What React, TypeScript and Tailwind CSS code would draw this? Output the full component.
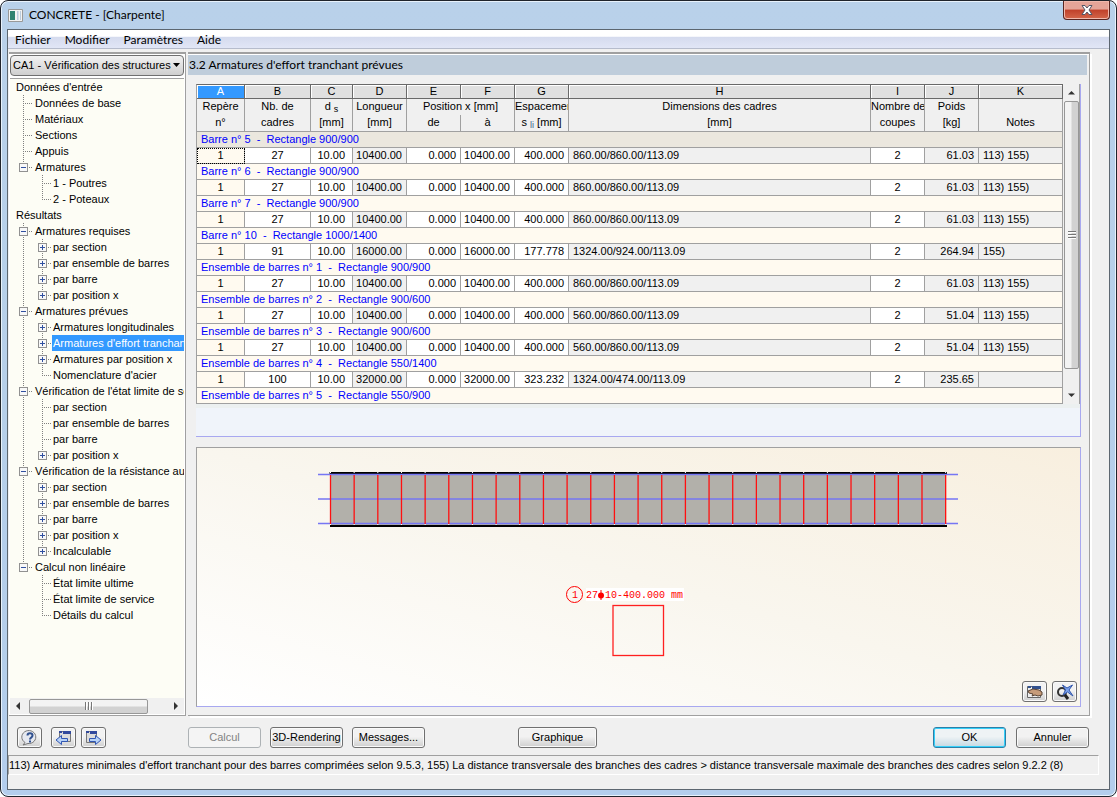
import clsx from "clsx";
import type { ReactNode } from "react";

type Node = { label: string; expand?: "+" | "-"; selected?: boolean; children?: Node[] };

const bySection: Node[] = [
	{ label: "par section", expand: "+" },
	{ label: "par ensemble de barres", expand: "+" },
	{ label: "par barre", expand: "+" },
	{ label: "par position x", expand: "+" },
];

const tree: Node[] = [
	{
		label: "Données d'entrée",
		children: [
			{ label: "Données de base" },
			{ label: "Matériaux" },
			{ label: "Sections" },
			{ label: "Appuis" },
			{ label: "Armatures", expand: "-", children: [{ label: "1 - Poutres" }, { label: "2 - Poteaux" }] },
		],
	},
	{
		label: "Résultats",
		children: [
			{ label: "Armatures requises", expand: "-", children: bySection },
			{
				label: "Armatures prévues",
				expand: "-",
				children: [
					{ label: "Armatures longitudinales", expand: "+" },
					{ label: "Armatures d'effort tranchant", expand: "+", selected: true },
					{ label: "Armatures par position x", expand: "+" },
					{ label: "Nomenclature d'acier" },
				],
			},
			{
				label: "Vérification de l'état limite de service",
				expand: "-",
				children: [
					{ label: "par section" },
					{ label: "par ensemble de barres" },
					{ label: "par barre" },
					{ label: "par position x", expand: "+" },
				],
			},
			{
				label: "Vérification de la résistance au feu",
				expand: "-",
				children: [...bySection, { label: "Incalculable", expand: "+" }],
			},
			{
				label: "Calcul non linéaire",
				expand: "-",
				children: [{ label: "État limite ultime" }, { label: "État limite de service" }, { label: "Détails du calcul" }],
			},
		],
	},
];

const groups = [
	{ title: "Barre n° 5  -  Rectangle 900/900", row: ["1", "27", "10.00", "10400.00", "0.000", "10400.00", "400.000", "860.00/860.00/113.09", "2", "61.03", "113) 155)"] },
	{ title: "Barre n° 6  -  Rectangle 900/900", row: ["1", "27", "10.00", "10400.00", "0.000", "10400.00", "400.000", "860.00/860.00/113.09", "2", "61.03", "113) 155)"] },
	{ title: "Barre n° 7  -  Rectangle 900/900", row: ["1", "27", "10.00", "10400.00", "0.000", "10400.00", "400.000", "860.00/860.00/113.09", "2", "61.03", "113) 155)"] },
	{ title: "Barre n° 10  -  Rectangle 1000/1400", row: ["1", "91", "10.00", "16000.00", "0.000", "16000.00", "177.778", "1324.00/924.00/113.09", "2", "264.94", "155)"] },
	{ title: "Ensemble de barres n° 1  -  Rectangle 900/900", row: ["1", "27", "10.00", "10400.00", "0.000", "10400.00", "400.000", "860.00/860.00/113.09", "2", "61.03", "113) 155)"] },
	{ title: "Ensemble de barres n° 2  -  Rectangle 900/600", row: ["1", "27", "10.00", "10400.00", "0.000", "10400.00", "400.000", "560.00/860.00/113.09", "2", "51.04", "113) 155)"] },
	{ title: "Ensemble de barres n° 3  -  Rectangle 900/600", row: ["1", "27", "10.00", "10400.00", "0.000", "10400.00", "400.000", "560.00/860.00/113.09", "2", "51.04", "113) 155)"] },
	{ title: "Ensemble de barres n° 4  -  Rectangle 550/1400", row: ["1", "100", "10.00", "32000.00", "0.000", "32000.00", "323.232", "1324.00/474.00/113.09", "2", "235.65", ""] },
	{ title: "Ensemble de barres n° 5  -  Rectangle 550/900" },
];

const columnWidths = ["w-12", "w-[66px]", "w-[42px]", "w-[54px]", "w-[54px]", "w-[54px]", "w-[54px]", "", "w-[54px]", "w-[54px]", "w-[84px]"];

const cellStyles = [
	"bg-[#fffaf0] text-center",
	"bg-white text-center",
	"bg-white text-right pr-[7px]",
	"bg-[#f0f0f0] text-right pr-1",
	"bg-white text-right pr-1",
	"bg-white text-right pr-1",
	"bg-white text-right pr-1",
	"bg-[#f0f0f0] text-left pl-1",
	"bg-white text-center",
	"bg-[#f0f0f0] text-right pr-1",
	"bg-[#f0f0f0] text-left pl-1",
];

function Cell({ kind, last }: { kind: "line" | "stop" | "empty" | "+" | "-"; last?: boolean }) {
	const box = kind === "+" || kind === "-";
	const svg = (
		<svg width="19" height="16" viewBox="0 0 19 16" shapeRendering="crispEdges" aria-hidden="true">
			{kind !== "empty" && <path d={last ? "M9.5 0V9" : "M9.5 0V16"} stroke="#808080" strokeDasharray="1 1" />}
			{(box || kind === "stop") && <path d="M9 8.5H18" stroke="#808080" strokeDasharray="1 1" />}
			{box && (
				<>
					<rect x="5.5" y="4.5" width="8" height="8" fill="#f8f8f8" stroke="#919191" />
					<path d="M7 8.5h5" stroke="#3050a0" />
				</>
			)}
			{kind === "+" && <path d="M9.5 6v5" stroke="#3050a0" />}
		</svg>
	);
	if (!box) return <span className="shrink-0">{svg}</span>;
	return (
		<button type="button" aria-label={kind === "+" ? "Développer" : "Réduire"} className="shrink-0">
			{svg}
		</button>
	);
}

function Branch({ node, depth, last, parentLast }: { node: Node; depth: number; last: boolean; parentLast: boolean }) {
	return (
		<li role="treeitem" aria-selected={!!node.selected}>
			<div className="flex h-4 items-stretch leading-4">
				{depth === 2 && <Cell kind={parentLast ? "empty" : "line"} />}
				{depth > 0 && <Cell kind={node.expand ?? "stop"} last={last} />}
				<span className={clsx("flex-1", depth === 2 ? "pl-px" : "pl-0.5", node.selected && "bg-[#3399ff] text-white")}>{node.label}</span>
			</div>
			{node.children && (
				<ul role="group">
					{node.children.map((child, i) => (
						<Branch key={child.label} node={child} depth={depth + 1} last={i === node.children!.length - 1} parentLast={last} />
					))}
				</ul>
			)}
		</li>
	);
}

function Sidebar() {
	return (
		<aside className="flex w-[177px] shrink-0 flex-col border-t-2 border-r border-b border-[#a0a0a0] bg-white p-px">
			<div className="relative mb-0.5">
				<select
					aria-label="Cas de calcul"
					className="h-[21px] w-full appearance-none rounded-sm border border-[#707070] bg-linear-to-b from-[#f2f2f2] to-[#cfcfcf] pl-0.5"
				>
					<option>CA1 - Vérification des structures</option>
				</select>
				<svg className="pointer-events-none absolute top-2 right-1" width="7" height="4" aria-hidden="true">
					<path d="M0 0h7L3.5 4z" />
				</svg>
			</div>
			<div className="flex flex-1 flex-col border-t border-[#a0a0a0] bg-[#fdfdf5]">
				<ul role="tree" className="flex-1 overflow-hidden pl-1 whitespace-nowrap">
					{tree.map((node) => (
						<Branch key={node.label} node={node} depth={0} last={false} parentLast={false} />
					))}
				</ul>
				<div className="flex h-4 items-center gap-2 bg-[#f0f0f0] px-1.5">
					<svg width="5" height="8" aria-hidden="true">
						<path d="M4 0v8L0 4z" fill="#333" />
					</svg>
					<div className="flex h-[15px] w-[119px] items-center justify-center gap-px rounded-xs border border-[#979797] bg-linear-to-b from-[#f3f3f3] from-45% to-[#d2d2d2] to-55%">
						<i className="h-2 w-0.5 border-r border-white bg-[#777]" />
						<i className="h-2 w-0.5 border-r border-white bg-[#777]" />
						<i className="h-2 w-0.5 border-r border-white bg-[#777]" />
					</div>
					<svg className="ml-auto" width="5" height="8" aria-hidden="true">
						<path d="M1 0v8l4-4z" fill="#333" />
					</svg>
				</div>
			</div>
		</aside>
	);
}

function Stirrups() {
	return (
		<table className="w-full min-w-0 table-fixed border-separate border-spacing-0 border-t border-l border-t-[#696969] border-l-[#a0a0a0] whitespace-pre">
			<colgroup>
				{columnWidths.map((width, i) => (
					<col key={i} className={width} />
				))}
			</colgroup>
			<thead className="[&_th]:overflow-hidden [&_th]:p-0 [&_th]:font-normal">
				<tr className="h-3.5 leading-[13px]">
					{"ABCDEFGHIJK".split("").map((letter, i) => (
						<th
							key={letter}
							className={clsx(
								"h-3.5 border-r border-b border-[#696969] shadow-[inset_1px_1px_0_#fff]",
								i === 0 ? "bg-[#3399ff] text-white" : "bg-[#e0e0e0]",
							)}
						>
							{letter}
						</th>
					))}
				</tr>
				<tr className="h-4 bg-[#f0f0f0] leading-[14px] [&>th]:border-r [&>th]:border-[#a0a0a0] [&>th]:align-top">
					<th>Repère</th>
					<th>Nb. de</th>
					<th>
						d <sub className="text-[9px] leading-none">s</sub>
					</th>
					<th>Longueur</th>
					<th colSpan={2}>Position x [mm]</th>
					<th>Espacement</th>
					<th>Dimensions des cadres</th>
					<th>Nombre de</th>
					<th>Poids</th>
					<th />
				</tr>
				<tr className="h-[17px] bg-[#f0f0f0] leading-[14px] [&>th]:border-r [&>th]:border-b [&>th]:border-[#a0a0a0] [&>th]:align-top">
					<th>n°</th>
					<th>cadres</th>
					<th>[mm]</th>
					<th>[mm]</th>
					<th>de</th>
					<th>à</th>
					<th>
						s <sub className="text-[9px] leading-none text-[#3a5f8a]">li</sub> [mm]
					</th>
					<th>[mm]</th>
					<th>coupes</th>
					<th>[kg]</th>
					<th>Notes</th>
				</tr>
			</thead>
			<tbody>
				{groups.flatMap((group, g) => [
					<tr key={group.title} className="h-4 leading-[15px]">
						<td
							colSpan={11}
							className={clsx("h-4 border-r border-b border-[#a0a0a0] py-0 pr-0 pl-1 text-[#0000ff]", g === 0 ? "bg-[#ebe7de]" : "bg-[#fffaf0]")}
						>
							{group.title}
						</td>
					</tr>,
					group.row && (
						<tr key={`${group.title} row`} className="h-4 leading-[15px]">
							{group.row.map((value, i) => (
								<td
									key={i}
									className={clsx(
										"h-4 border-r border-b border-[#a0a0a0] p-0",
										cellStyles[i],
										g === 0 && i === 0 && "outline-1 -outline-offset-1 outline-black outline-dotted",
									)}
								>
									{value}
								</td>
							))}
						</tr>
					),
				])}
			</tbody>
		</table>
	);
}

function Scrollbar() {
	return (
		<div className="ml-px flex w-4 shrink-0 flex-col items-center border-r border-[#a0a0a0] bg-[#f0f0f0]">
			<svg className="my-1.5" width="7" height="5" aria-hidden="true">
				<path d="M0 4.5h7L3.5 1z" fill="#333" />
			</svg>
			<div className="mb-6 flex w-[15px] flex-1 flex-col items-center justify-center gap-px rounded-xs border border-[#979797] bg-linear-to-r from-[#f3f3f3] from-45% to-[#d2d2d2] to-55%">
				<i className="h-0.5 w-2 border-b border-white bg-[#777]" />
				<i className="h-0.5 w-2 border-b border-white bg-[#777]" />
				<i className="h-0.5 w-2 border-b border-white bg-[#777]" />
			</div>
			<svg className="mb-1.5" width="7" height="5" aria-hidden="true">
				<path d="M0 .5h7L3.5 4z" fill="#333" />
			</svg>
		</div>
	);
}

function Beam() {
	const frames = Array.from({ length: 27 }, (_, i) => 133.5 + i * 23.66);
	return (
		<svg className="min-h-0 w-full flex-1" viewBox="0 0 883 258" role="img" aria-label="Poutre et cadres">
			<rect x="133" y="25" width="616" height="53" fill="#b2b0aa" />
			<path d="M132.500 25H750M133 78H750" stroke="#000" strokeWidth="2" />
			<path d="M121 26.500H761M121 51H761M121 75.500H761" stroke="#7676f4" strokeWidth="1.500" />
			{frames.map((x) => (
				<g key={x}>
					<path d={`M${x} 27V76`} stroke="#ff1010" strokeWidth="1.300" />
					<path d={`M${x} 24v1M${x} 76v1`} stroke="#fff" />
				</g>
			))}
			<circle cx="377.500" cy="146.500" r="8" fill="none" stroke="#f00" />
			<rect x="389" y="140" width="98" height="13" fill="#fff" />
			<g fill="#f00" fontFamily="'Liberation Mono', monospace" fontSize="10">
				<text x="375" y="150">
					1
				</text>
				<text x="389" y="150">
					27
				</text>
				<text x="408" y="150">
					10-400.000 mm
				</text>
			</g>
			<path d="M404 142v10" stroke="#f00" />
			<circle cx="404" cy="147.500" r="3" fill="#f00" />
			<rect x="416" y="157.500" width="50.500" height="50" fill="none" stroke="#ff2020" strokeWidth="1.300" />
		</svg>
	);
}

type PushProps = { children: ReactNode; label?: string; className?: string; disabled?: boolean; primary?: boolean };

function Push({ children, label, className, disabled, primary }: PushProps) {
	return (
		<button
			type="button"
			aria-label={label}
			disabled={disabled}
			className={clsx(
				"flex h-[21px] items-center justify-center rounded-[3px] border whitespace-nowrap",
				disabled && "border-[#adb2b5] bg-[#f4f4f4] text-[#838383]",
				primary && "border-[#2c7fa8] bg-linear-to-b from-[#eef3f5] from-45% to-[#c4d8e2] shadow-[inset_0_0_0_1px_#35d0fa]",
				!disabled && !primary && "border-[#707070] bg-linear-to-b from-[#f2f2f2] from-45% to-[#cfcfcf] shadow-[inset_0_0_0_1px_#fafafa]",
				className,
			)}
		>
			{children}
		</button>
	);
}

function PageIcon({ forward }: { forward?: boolean }) {
	return (
		<svg width="17" height="16" viewBox="0 0 17 16" aria-hidden="true">
			<path d={forward ? "M1.5 1.5h10v11h-10z" : "M4.5 1.5h11v10h-11z"} fill="#dcdcdc" stroke="#777" />
			<path d={forward ? "M1 1h3v2H1zM5 1h7v3H5z" : "M4 1h3v2H4zM8 1h8v3H8z"} fill="#31499d" />
			<path
				d={forward ? "M4.5 8.5h6V5.500l5.500 4.500-5.500 4.500v-3h-6z" : "M12.500 8.5h-6V5.500L1 10l5.500 4.500v-3h6z"}
				fill="#b7d2f7"
				stroke="#3156b3"
			/>
		</svg>
	);
}

export default function App() {
	return (
		<div className="flex min-h-screen flex-col rounded-lg border border-[#20242c] bg-linear-to-b from-[#b9d1ea] to-[#b3cdec] px-1.5 pb-1.5 font-['Liberation_Sans',sans-serif] text-[11px] text-black shadow-[inset_0_0_0_1px_#e8f2fc]">
			<header className="flex h-7 items-start justify-between pl-px font-[Lato,sans-serif] text-xs">
				<div className="flex items-center gap-1.5 pt-1.5 leading-4">
					<svg width="15" height="13" viewBox="0 0 15 13" aria-hidden="true">
						<path d="M.5.5h14v12H.5z" fill="#f3f3f3" stroke="#999" />
						<path d="M2 2h5v9H2z" fill="#2f8270" />
						<path d="M9 2h1.500v9H9zM12 2h1v9h-1z" fill="#bcd" />
					</svg>
					<h1>CONCRETE - [Charpente]</h1>
				</div>
				<button
					type="button"
					aria-label="Fermer"
					className="flex h-[19px] w-[47px] items-center justify-center rounded-b-[4px] border border-t-0 border-[#5a2520] bg-linear-to-b from-[#e5a498] from-45% via-[#c0402a] via-50% to-[#d4664a] shadow-[inset_0_0_0_1px_#f0b8ac]"
				>
					<svg width="12" height="10" viewBox="0 0 12 10" aria-hidden="true">
						<path d="M1 .5h3l2 2.500 2-2.500h3L8 5l3 4.500H8L6 7 4 9.500H1L4 5z" fill="#fff" stroke="#535666" />
					</svg>
				</button>
			</header>
			<div className="flex flex-1 flex-col border border-[#5c6670] bg-[#f0f0f0]">
				<nav className="flex h-[19px] gap-3.5 border-b border-[#b6bccc] bg-linear-to-b from-white from-35% via-[#d5dbee] via-40% to-[#e1e6f6] px-[7px] font-[Lato,sans-serif] text-xs leading-[19px]">
					<button type="button">Fichier</button>
					<button type="button">Modifier</button>
					<button type="button">Paramètres</button>
					<button type="button">Aide</button>
				</nav>
				<div className="mt-[3px] flex flex-1 pl-px">
					<Sidebar />
					<main className="mr-[19px] ml-0.5 flex min-w-0 flex-1 flex-col border-t-2 border-r border-b border-[#a0a0a0] shadow-[2px_2px_0_#fff,inset_0_1px_0_#fff]">
						<h2 className="mt-px mr-0.5 h-5 bg-[#bfcddb] pl-px font-[Lato,sans-serif] text-xs leading-5">3.2 Armatures d'effort tranchant prévues</h2>
						<div className="mt-[9px] mr-2 ml-2 border-r border-b border-[#a8a8f0] bg-[#f0f4fa]">
							<div className="flex bg-[#f0f0f0]">
								<Stirrups />
								<Scrollbar />
							</div>
							<div className="h-8 border-t-4 border-[#ecf0f0]" />
						</div>
						<div className="relative mx-2 mt-2.5 mb-2 flex min-h-[260px] flex-1 border border-t-[#a0a0a0] border-r-[#a8a8f0] border-b-[#a8a8f0] border-l-[#a0a0a0] bg-linear-to-tr from-white via-[#f9f6ee] via-50% to-[#f8efdf]">
							<Beam />
							<div className="absolute right-[3px] bottom-1 flex gap-[5px]">
								<Push label="Imprimer" className="w-[25px]">
									<svg width="16" height="14" viewBox="0 0 16 14" aria-hidden="true">
										<path d="M.5 1.500h13v11H.5z" fill="#eee" stroke="#666" />
										<path d="M1 1h3v2H1zM5 1h9v3H5z" fill="#31518f" />
										<path d="M1 6l5-2 6 1 3 2v3l-4 1-3-1-3 1 1-2-4-1z" fill="#c69b79" stroke="#594435" />
									</svg>
								</Push>
								<Push label="Vue entière" className="w-[25px]">
									<svg width="18" height="16" viewBox="0 0 18 16" fill="none" aria-hidden="true">
										<circle cx="6" cy="8" r="4" stroke="#333" strokeWidth="2" />
										<path d="m9 11 3 4" stroke="#222" strokeWidth="3" />
										<path d="M6.500 1 11 4l5.500-3-3.500 5 4 6-5.500-4L7 11l2.500-5z" fill="#7ba1eb" stroke="#3156ab" />
									</svg>
								</Push>
							</div>
						</div>
					</main>
				</div>
				<footer className="mt-[11px]">
					<div className="flex items-center pr-5 pl-[9px]">
						<div className="flex w-[171px] shrink-0">
							<Push label="Aide" className="w-[25px]">
								<svg width="18" height="16" viewBox="0 0 18 16" aria-hidden="true">
									<path d="M4 12.500 2 15l5-1.500a7 6.500 0 1 0-3-1z" fill="#e6e9f0" stroke="#777" />
									<path d="M6.500 5.500c0-3 5-3 5 0 0 2-2.500 2-2.500 4" fill="none" stroke="#31518f" strokeWidth="2" />
									<path d="M8 10.500h2v2H8z" fill="#31518f" />
								</svg>
							</Push>
							<Push label="Précédent" className="mr-[5px] ml-[9px] w-[25px]">
								<PageIcon />
							</Push>
							<Push label="Suivant" className="w-[25px]">
								<PageIcon forward />
							</Push>
						</div>
						<div className="flex gap-[9px]">
							<Push disabled className="w-[73px]">
								Calcul
							</Push>
							<Push className="w-[73px]">3D-Rendering</Push>
							<Push className="w-[73px]">Messages...</Push>
						</div>
						<Push className="ml-[93px] w-[79px]">Graphique</Push>
						<div className="ml-auto flex gap-2.5">
							<Push primary className="w-[73px]">
								OK
							</Push>
							<Push className="w-[73px]">Annuler</Push>
						</div>
					</div>
					<p className="mt-[7px] mr-2.5 mb-3.5 h-5 border border-t-[#a0a0a0] border-r-white border-b-white border-l-[#a0a0a0] leading-[18px]">
						113) Armatures minimales d'effort tranchant pour des barres comprimées selon 9.5.3, 155) La distance transversale des branches des cadres &gt; distance
						transversale maximale des branches des cadres selon 9.2.2 (8)
					</p>
				</footer>
			</div>
		</div>
	);
}
